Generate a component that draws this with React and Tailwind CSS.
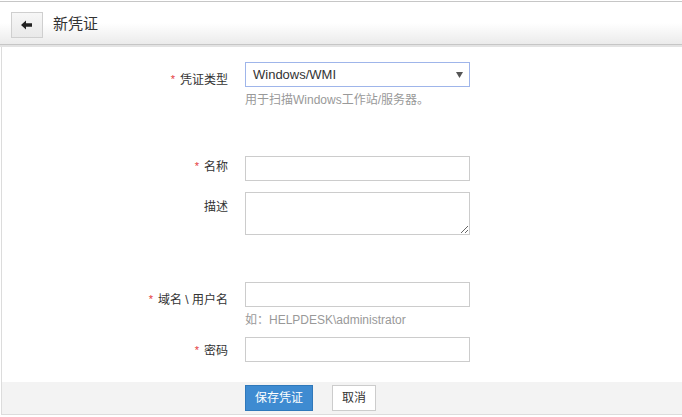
import React from "react";

const font = { fontFamily: '"Liberation Sans", Arial, "Noto Sans CJK SC", sans-serif' };

function Star() {
  return <span className="text-[#e4393c] text-[11px] mr-[5px] relative top-[-1px]">*</span>;
}

export default function App() {
  return (
    <div className="w-[682px] h-[417px] bg-white overflow-hidden text-[#333]" style={font}>
      <div className="mt-px h-[44px] border-t border-b border-[#c6c6c6] bg-gradient-to-b from-white from-50% to-[#ebebeb] flex items-center">
        <button className="ml-[11px] mt-[3px] w-[32px] h-[26px] border border-[#cfcfcf] bg-gradient-to-b from-[#f7f7f7] to-[#e9e9e9] flex items-center justify-center">
          <svg width="12" height="10" viewBox="0 0 12 10">
            <path d="M0 5 L5 0.5 L5 3.3 L11 3.3 L11 6.7 L5 6.7 L5 9.5 Z" fill="#222" />
          </svg>
        </button>
        <span className="ml-[10px] mt-[2px] text-[15px] text-[#333]">新凭证</span>
      </div>
      <div className="h-[2px] bg-[#e3e3e3]" />
      <div className="ml-px border-l border-b border-[#dcdcdc] h-[368px] flex flex-col">
        <div className="flex flex-col pt-[15px] text-[12px]">
          <div className="flex">
            <div className="w-[226px] text-right pt-[11px] leading-[14px]"><Star />凭证类型</div>
            <div className="ml-[17px]">
              <div className="w-[225px] h-[25px] border border-[#9fb5ea] flex items-center justify-between pl-[7px] pr-[6px]">
                <span className="text-[13px] text-[#333]">Windows/WMI</span>
                <svg width="7" height="6" viewBox="0 0 7 6"><path d="M0 0 L7 0 L3.5 6 Z" fill="#555" /></svg>
              </div>
              <div className="mt-[6px] text-[12px] leading-[14px] text-[#999]">用于扫描Windows工作站/服务器。</div>
            </div>
          </div>

          <div className="flex mt-[49px]">
            <div className="w-[226px] text-right pt-[4px] leading-[14px]"><Star />名称</div>
            <div className="ml-[17px] w-[225px] h-[25px] border border-[#cccccc]" />
          </div>

          <div className="flex mt-[11px]">
            <div className="w-[226px] text-right pt-[8px] leading-[14px]">描述</div>
            <textarea className="ml-[17px] w-[225px] h-[43px] border border-[#cccccc] outline-none resize" />
          </div>

          <div className="flex mt-[47px]">
            <div className="w-[226px] text-right pt-[11px] leading-[14px]"><Star />域名 \ 用户名</div>
            <div className="ml-[17px]">
              <div className="w-[225px] h-[25px] border border-[#cccccc]" />
              <div className="mt-[6px] text-[12px] leading-[14px] text-[#999]">如：HELPDESK\administrator</div>
            </div>
          </div>

          <div className="flex mt-[10px]">
            <div className="w-[226px] text-right pt-[7px] leading-[14px]"><Star />密码</div>
            <div className="ml-[17px] w-[225px] h-[25px] border border-[#cccccc]" />
          </div>
        </div>
        <div className="mt-auto h-[32px] bg-[#f3f3f3] flex items-center">
          <div className="ml-[243px] flex gap-[19px] text-[12px]">
            <button className="w-[68px] h-[26px] bg-[#3e8bd1] border border-[#2f78ba] text-white">保存凭证</button>
            <button className="w-[44px] h-[26px] bg-white border border-[#cccccc] text-[#333]">取消</button>
          </div>
        </div>
      </div>
    </div>
  );
}
